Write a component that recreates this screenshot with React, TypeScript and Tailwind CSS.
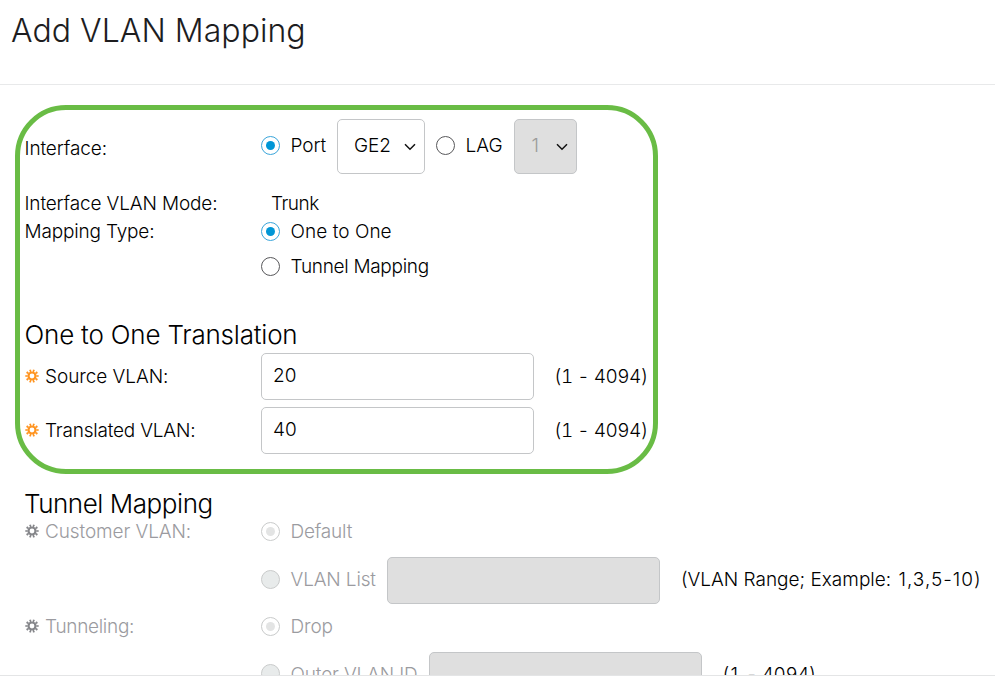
import React from 'react';
import clsx from 'clsx';

type RadioProps = {
  label: string;
  checked?: boolean;
  disabled?: boolean;
  className?: string;
};

const Radio: React.FC<RadioProps> = ({ label, checked, disabled, className }) => (
  <label className="flex items-center gap-[10.5px]">
    <span
      className={clsx(
        'mb-[2px] flex size-[19px] shrink-0 items-center justify-center rounded-full border',
        disabled ? 'border-[#c9cbcb]' : checked ? 'border-[#3aa5da]' : 'border-[#58585b]',
        disabled && !checked && 'bg-[#e8ebeb]'
      )}
    >
      {checked && <span className={clsx('size-[9px] rounded-full', disabled ? 'bg-[#e3e4e4]' : 'bg-[#0096d6]')} />}
    </span>
    <span className={clsx(disabled && 'text-[#9b9ba0]', className)}>{label}</span>
  </label>
);

const Chevron = () => (
  <svg width="12" height="8" viewBox="0 0 12 8" fill="none" stroke="#111" strokeWidth="1.5" className="mt-px">
    <path d="M1 1.2 L6 6.2 L11 1.2" />
  </svg>
);

// Marks a mandatory field
const Gear = ({ className }: { className: string }) => (
  <svg width="14" height="14" viewBox="-7 -7 14 14" fill="none" stroke="currentColor" className={className}>
    <circle r="3.5" strokeWidth="2.2" />
    <circle r="5.4" strokeWidth="2.4" pathLength="20" strokeDasharray="1 1" strokeDashoffset="0.5" />
  </svg>
);

const Required = ({ label, disabled, className }: { label: string; disabled?: boolean; className?: string }) => (
  <div className={clsx('flex w-[236px] shrink-0 items-center gap-1.5', disabled && 'text-[#9b9ba0]')}>
    <Gear className={clsx('mb-[2px]', disabled ? 'text-[#85868a]' : 'text-[#ff9420]')} />
    <span className={className}>{label}</span>
  </div>
);

const TextField = ({ value, disabled }: { value?: string; disabled?: boolean }) => (
  <div
    className={clsx(
      'flex h-[47px] w-[273px] shrink-0 items-center rounded-[5px] border border-[#c4c6c8] px-[11px] pb-[2px]',
      disabled ? 'bg-[#dfdfdf]' : 'bg-white'
    )}
  >
    {value}
  </div>
);

export default function App() {
  return (
    <div className="relative h-[688px] w-[995px] overflow-hidden bg-white font-['Inter','Liberation_Sans',sans-serif] text-[19px] leading-7 font-light whitespace-nowrap text-black">
      <header className="h-[85px] border-b border-[#e8e9ea] pt-[11px] pl-[11px]">
        <h1 className="text-[32px] leading-10 font-light tracking-[0.05px] text-[#1d1d1f]">Add VLAN Mapping</h1>
      </header>

      <main className="h-[591px] overflow-hidden border-b border-[#e4e5e6] pt-[34px] pl-[25px]">
        <div className="flex h-[55px] items-center">
          <div className="-ml-[0.5px] w-[236.5px] pt-[4px] tracking-[-0.1px]">Interface:</div>
          <div className="flex items-center">
            <div className="pb-px">
              <Radio label="Port" checked className="tracking-[-0.1px]" />
            </div>
            <div className="ml-[10.5px] flex h-[55px] w-[88px] items-center justify-between rounded-[5px] border border-[#c4c6c8] pr-[8px] pl-[16.5px]">
              <span className="pb-[2px] tracking-[-0.1px]">GE2</span>
              <Chevron />
            </div>
            <div className="ml-[11px] pb-px">
              <Radio label="LAG" className="pl-[0.5px]" />
            </div>
            <div className="ml-[11px] flex h-[55px] w-[63px] items-center justify-between rounded-[5px] border border-[#c4c6c8] bg-[#dfdfdf] pr-[8px] pl-[17px]">
              <span className="pb-[2px] text-[#9b9b9b]">1</span>
              <Chevron />
            </div>
          </div>
        </div>

        <div className="mt-[16px] flex h-7">
          <div className="-ml-[0.5px] w-[246.5px] tracking-[-0.14px]">Interface VLAN Mode:</div>
          <div className="tracking-[-0.5px]">Trunk</div>
        </div>
        <div className="flex">
          <div className="-ml-[0.5px] w-[236.5px] tracking-[-0.17px]">Mapping Type:</div>
          <div className="flex flex-col gap-[7px]">
            <Radio label="One to One" checked className="tracking-[0.05px]" />
            <Radio label="Tunnel Mapping" className="tracking-[-0.3px]" />
          </div>
        </div>

        <h2 className="mt-[37px] -ml-[0.5px] h-[35px] text-[26px] leading-[34px] font-light tracking-[-0.2px]">
          One to One Translation
        </h2>
        <div className="flex items-center">
          <Required label="Source VLAN:" className="tracking-[-0.06px]" />
          <TextField value="20" />
          <span className="ml-[20px] tracking-[-0.5px] tabular-nums">(1 - 4094)</span>
        </div>
        <div className="mt-[7px] flex items-center">
          <Required label="Translated VLAN:" className="tracking-[-0.2px]" />
          <TextField value="40" />
          <span className="ml-[20px] tracking-[-0.5px] tabular-nums">(1 - 4094)</span>
        </div>

        <h2 className="mt-[33px] -ml-px h-[31px] text-[26px] leading-[34px] font-light tracking-[-0.45px]">
          Tunnel Mapping
        </h2>
        <div className="flex h-7">
          <Required label="Customer VLAN:" disabled className="tracking-[-0.1px]" />
          <Radio label="Default" checked disabled className="tracking-[-0.2px]" />
        </div>
        <div className="mt-[11px] flex items-center pl-[236px]">
          <div className="pb-px">
            <Radio label="VLAN List" disabled className="tracking-[-0.15px]" />
          </div>
          <div className="ml-[11.5px]">
            <TextField disabled />
          </div>
          <span className="ml-[20.5px] pb-px">
            (VLAN Range; Example: <span className="ml-[2px] tracking-[1px]">1,3,5-10)</span>
          </span>
        </div>
        <div className="mt-[9px] flex h-7">
          <Required label="Tunneling:" disabled className="tracking-[-0.3px]" />
          <Radio label="Drop" checked disabled className="tracking-[-0.13px]" />
        </div>
        <div className="mt-[11px] flex items-center pl-[236px]">
          <div className="pb-[2px]">
            <Radio label="Outer VLAN ID" disabled className="tracking-[-0.15px]" />
          </div>
          <div className="ml-[11.5px]">
            <TextField disabled />
          </div>
          <span className="ml-[20px] pb-[2px] tracking-[-0.5px] tabular-nums">(1 - 4094)</span>
        </div>
      </main>

      {/* Highlight around the one to one settings */}
      <div className="pointer-events-none absolute top-[105px] left-[15px] h-[369px] w-[643px] rounded-[51px] border-[5px] border-[#69bc45]" />
    </div>
  );
}
